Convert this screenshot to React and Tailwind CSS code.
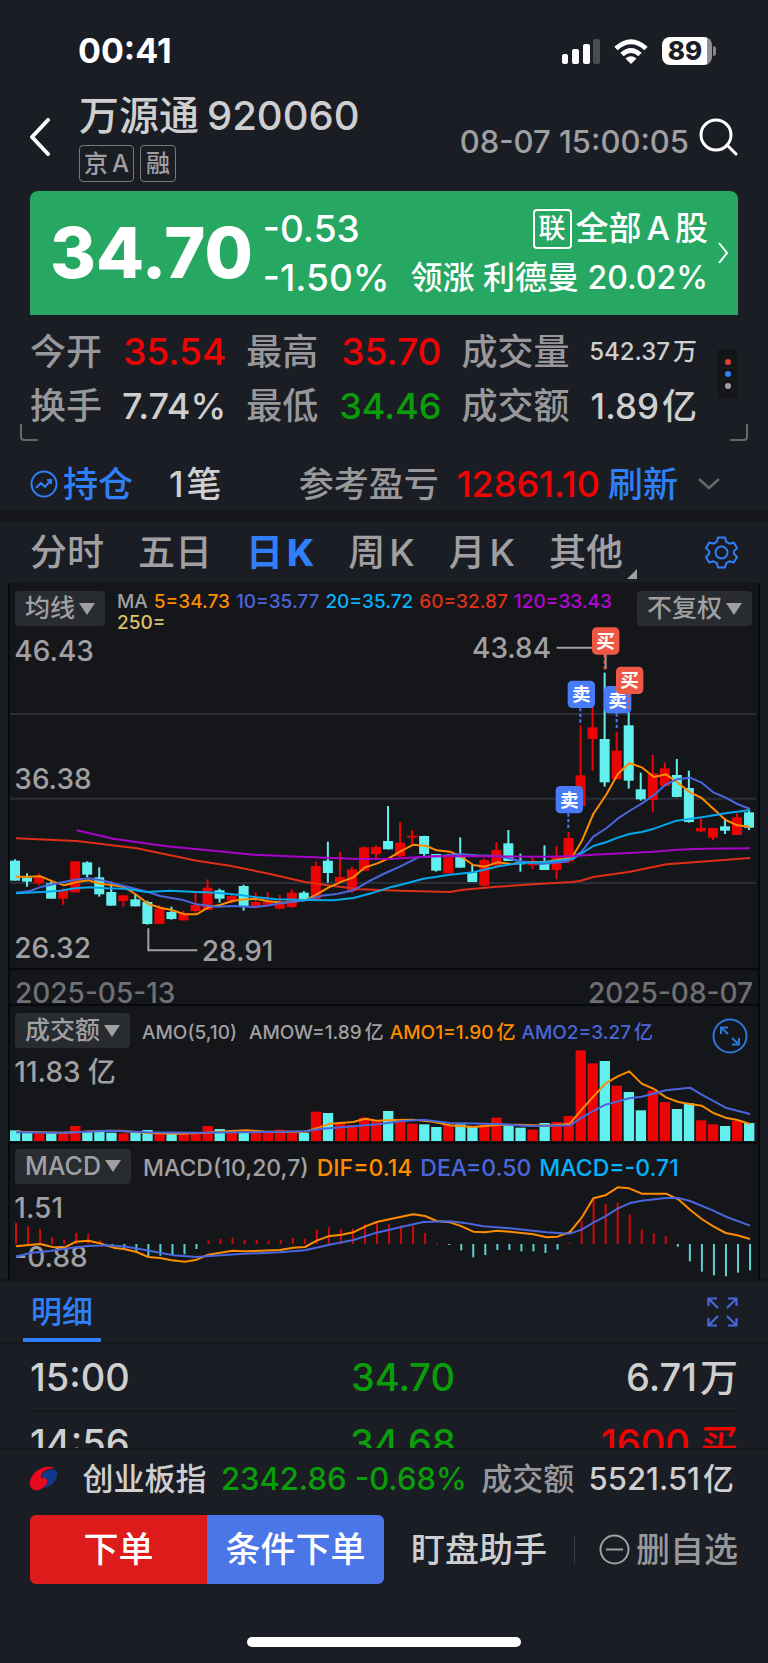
import React, { useState } from "react";

// [direction, high, body top, body bottom, low] in chart units
const CANDLES = [
  ["d", 838, 842, 902, 902], ["d", 880, 893, 905, 920], ["u", 880, 893, 910, 916],
  ["d", 905, 910, 956, 956], ["u", 925, 930, 956, 974], ["u", 844, 844, 937, 937],
  ["d", 844, 847, 884, 892], ["d", 862, 892, 943, 950], ["d", 905, 936, 977, 977],
  ["u", 945, 946, 963, 980], ["d", 942, 958, 979, 979], ["d", 962, 966, 1032, 1034],
  ["u", 975, 985, 1032, 1032], ["d", 980, 996, 1017, 1019], ["u", 992, 1000, 1021, 1021],
  ["u", 938, 975, 993, 998], ["u", 898, 923, 990, 990], ["d", 926, 931, 956, 968],
  ["u", 945, 948, 962, 970], ["d", 914, 918, 981, 992], ["u", 938, 966, 983, 985],
  ["u", 937, 965, 978, 980], ["u", 945, 965, 986, 988], ["u", 928, 938, 981, 983],
  ["d", 933, 938, 960, 960], ["u", 845, 858, 958, 958], ["d", 785, 842, 879, 908],
  ["u", 815, 891, 906, 908], ["u", 861, 868, 933, 938], ["u", 800, 802, 872, 874],
  ["u", 796, 801, 822, 836], ["d", 678, 783, 808, 808], ["u", 726, 788, 829, 832],
  ["u", 750, 767, 773, 792], ["d", 767, 768, 822, 830], ["d", 822, 822, 872, 875],
  ["u", 820, 832, 880, 880], ["d", 772, 828, 863, 863], ["d", 855, 877, 906, 906],
  ["u", 835, 840, 917, 920], ["u", 786, 810, 857, 857], ["d", 750, 790, 843, 843],
  ["d", 821, 845, 853, 875], ["u", 832, 848, 856, 867], ["d", 796, 848, 870, 870],
  ["u", 798, 828, 870, 898], ["u", 756, 774, 845, 850], ["u", 437, 586, 678, 680],
  ["u", 380, 442, 477, 572], ["d", 278, 477, 607, 620], ["u", 456, 512, 598, 598],
  ["d", 380, 436, 602, 626], ["d", 578, 628, 658, 662], ["u", 525, 580, 660, 697],
  ["u", 548, 565, 618, 620], ["d", 537, 585, 651, 652], ["d", 572, 624, 726, 728],
  ["u", 715, 744, 754, 756], ["u", 743, 744, 773, 780], ["d", 716, 739, 752, 762],
  ["u", 700, 712, 765, 765], ["d", 690, 697, 743, 750],
];

const AMOUNTS = [
  508, 516, 517, 515, 516, 495, 513, 508, 515, 517, 514, 507, 513, 517, 515, 515,
  495, 504, 515, 514, 511, 512, 506, 510, 515, 452, 456, 487, 492, 470, 480, 450,
  482, 488, 490, 498, 492, 490, 498, 490, 470, 492, 500, 506, 486, 483, 465, 268,
  307, 300, 374, 393, 448, 389, 423, 444, 427, 478, 490, 495, 480, 486,
];

const MACD_BARS = [
  786, 796, 804, 828, 836, 816, 819, 838, 855, 863, 871, 886, 884, 885, 880, 864,
  839, 833, 830, 836, 837, 839, 837, 831, 833, 806, 799, 804, 803, 790, 785, 790,
  793, 795, 816, 846, 852, 868, 889, 882, 867, 867, 871, 871, 876, 866, 845, 780,
  713, 729, 725, 760, 806, 817, 825, 857, 901, 932, 943, 946, 935, 928,
];

const MA_LINES = [
  { color: "#df2f16", points: "48,775 230,783 410,805 590,842 690,857 800,880 915,906 1000,918 1080,928 1200,932 1350,936 1390,929 1480,921 1600,913 1715,906 1740,903 1780,891 1890,875 2000,853 2100,845 2250,834" },
  { color: "#ff8c00", points: "48,890 85,890 122,889 158,904 193,916 230,906 265,901 302,911 340,916 372,921 410,945 445,972 480,983 515,990 555,1003 590,1003 625,982 660,975 697,963 733,958 770,957 805,964 850,968 915,961 950,943 985,923 1025,905 1060,892 1095,862 1130,851 1165,836 1200,815 1240,794 1280,798 1310,811 1350,815 1380,828 1420,855 1455,860 1492,847 1535,852 1580,846 1640,845 1680,838 1715,834 1745,784 1780,702 1820,642 1853,583 1888,549 1925,562 1962,591 1998,583 2030,606 2070,637 2105,654 2140,686 2177,720 2212,736 2250,740" },
  { color: "#4a66dc", points: "48,938 90,933 125,920 180,908 225,899 265,895 305,901 345,911 400,925 440,935 480,948 545,959 590,973 650,980 700,978 760,981 800,977 840,970 915,961 965,947 1010,942 1060,931 1105,905 1150,882 1200,860 1255,832 1320,828 1380,822 1430,826 1500,829 1560,843 1620,852 1700,845 1745,815 1780,770 1820,744 1853,716 1888,693 1925,671 1962,645 1998,613 2030,598 2070,593 2105,608 2140,637 2177,653 2212,672 2250,687" },
  { color: "#05a9ec", points: "48,940 125,936 180,932 225,925 270,922 320,925 375,926 440,936 510,932 590,936 650,938 720,945 770,952 830,958 915,960 1000,961 1060,954 1120,938 1170,922 1200,915 1270,896 1350,884 1420,877 1500,858 1560,849 1640,846 1720,836 1780,798 1820,786 1853,773 1888,762 1925,756 1962,746 2030,722 2105,712 2177,700 2250,690" },
  { color: "#a704c8", points: "230,751 340,776 500,799 640,812 760,824 900,830 1080,837 1180,836 1300,829 1450,829 1640,830 1720,828 1780,824 1960,815 2030,809 2110,806 2250,805" },
];

const AMO_LINES = [
  { color: "#ff8c00", points: "48,512 190,515 300,510 360,509 440,516 540,518 620,515 680,511 740,508 800,512 915,512 950,502 990,488 1060,483 1095,473 1130,479 1180,477 1240,476 1300,482 1350,493 1420,498 1490,492 1560,491 1640,494 1710,488 1745,446 1780,407 1816,368 1853,346 1888,331 1925,368 1962,384 1998,409 2035,423 2070,429 2105,434 2140,456 2177,470 2212,477 2250,489" },
  { color: "#4a66dc", points: "48,514 190,515 330,509 440,514 590,515 740,514 915,511 960,504 1060,496 1140,489 1200,481 1270,476 1350,486 1490,489 1590,495 1710,493 1745,470 1780,450 1816,431 1888,412 1925,407 1998,388 2070,380 2105,401 2177,440 2250,459" },
];

const MACD_LINES = [
  { color: "#ff8c00", points: "48,856 120,849 158,858 193,860 228,842 265,839 300,847 345,861 372,864 410,873 445,888 480,891 515,898 555,902 590,896 625,881 697,869 733,871 840,867 880,860 915,858 950,839 985,826 1025,821 1060,814 1095,797 1130,783 1200,768 1240,760 1275,765 1310,780 1350,784 1380,794 1420,812 1455,814 1492,809 1530,812 1600,820 1640,829 1672,827 1710,813 1745,770 1780,712 1816,703 1853,679 1888,682 1925,698 1998,698 2035,715 2070,746 2105,774 2140,796 2177,816 2212,823 2250,834" },
  { color: "#4a66dc", points: "48,887 90,876 150,870 228,859 265,855 320,853 380,857 440,868 520,883 590,888 640,884 720,879 840,874 915,868 985,852 1060,837 1130,815 1200,799 1270,783 1350,781 1400,787 1450,796 1530,802 1640,814 1710,818 1745,806 1780,785 1816,766 1853,743 1888,727 1925,719 1998,711 2035,711 2070,720 2140,749 2180,768 2250,794" },
];

const TRADES = [
  { x: 1703, y: 302, side: "卖" },
  { x: 1667, y: 618, side: "卖" },
  { x: 1812, y: 318, side: "卖" },
  { x: 1776, y: 142, side: "买" },
  { x: 1848, y: 260, side: "买" },
];

const STATS = [
  { label: "今开", value: "35.54", color: "text-[#ef0404]", size: "text-[37px]" },
  { label: "最高", value: "35.70", color: "text-[#ef0404]", size: "text-[37px]" },
  { label: "成交量", value: "542.37", unit: "万", color: "text-[#cfcfcf]", size: "text-2xl" },
  { label: "换手", value: "7.74%", color: "text-[#cfcfcf]", size: "text-4xl" },
  { label: "最低", value: "34.46", color: "text-[#0a9d0a]", size: "text-4xl" },
  { label: "成交额", value: "1.89", unit: "亿", color: "text-[#cfcfcf]", size: "text-[35px]" },
];

const TABS = ["分时", "五日", "日K", "周K", "月K", "其他"];

const UP = "#ec0303";
const DOWN = "#62f0ee";
const candleX = (i) => 45 + i * 36.1;
const tone = (dir) => (dir === "u" ? UP : DOWN);

const Lines = ({ lines }) =>
  lines.map((l) => (
    <polyline
      key={l.color}
      points={l.points}
      fill="none"
      stroke={l.color}
      strokeWidth="6"
      strokeLinejoin="round"
    />
  ));

const AxisText = ({ x, y, children }) => (
  <text x={x} y={y} fontSize="84" fontWeight="500" fill="#a0a0a3">
    {children}
  </text>
);

// number followed by 万 / 亿 with a little air between them
const Amount = ({ value, unit }) => (
  <span className="inline-flex gap-[3px]">
    <span>{value}</span>
    <span>{unit}</span>
  </span>
);

const StatusBar = () => (
  <div className="flex items-center justify-between pt-[31px] pl-[78px] pr-[52px] leading-10 text-white">
    <span className="text-[34px] font-bold">00:41</span>
    <div className="flex items-center gap-[14px]">
      <svg width="38" height="25" viewBox="0 0 38 25" fill="#fff">
        <rect x="0" y="15" width="6" height="10" rx="2" />
        <rect x="10" y="10" width="7" height="15" rx="2" />
        <rect x="21" y="5" width="7" height="20" rx="2" />
        <rect x="31" y="0" width="7" height="25" rx="2" fill="#4b4c52" />
      </svg>
      <svg width="34" height="25" viewBox="0 0 34 25" fill="none" stroke="#fff" strokeWidth="5">
        <path d="M2 9.500Q17 -4 32 9.500" />
        <path d="M8 15.500Q17 7.500 26 15.500" />
        <path d="M17 25L11.500 19.500Q17 15 22.500 19.500Z" fill="#fff" stroke="none" />
      </svg>
      <div className="flex items-center">
        <div className="flex h-7 w-[50px] items-center justify-center rounded-lg bg-linear-to-r from-white from-90% to-[#909196] to-90% pr-1 text-[26px] font-extrabold text-[#1b1d25]">
          89
        </div>
        <div className="ml-px h-2.5 w-[3px] rounded-r-full bg-[#85868b]" />
      </div>
    </div>
  </div>
);

const Header = () => (
  <header className="flex items-center pt-5 pr-[30px] pb-[9px] pl-[30px]">
    <button aria-label="返回" className="w-[49px] shrink-0">
      <svg width="21" height="38" viewBox="0 0 21 38" fill="none" stroke="#fff" strokeWidth="4" strokeLinecap="round" strokeLinejoin="round">
        <path d="M18 2L2 19l16 17" />
      </svg>
    </button>
    <div className="flex-1">
      <h1 className="flex gap-2 text-[40px] leading-[50px] font-medium text-[#cfcfcf]">
        <span>万源通</span>
        <span>920060</span>
      </h1>
      <div className="mt-1 flex gap-1.5 text-2xl leading-[35px] font-medium text-[#a0a0a3]">
        <span className="flex gap-1 rounded border border-[#77787c] px-1">
          <span>京</span>
          <span>A</span>
        </span>
        <span className="rounded border border-[#77787c] px-[5px]">融</span>
      </div>
    </div>
    <time className="pt-3 text-[31px] font-medium text-[#a0a0a3]">08-07 15:00:05</time>
    <button aria-label="搜索" className="ml-2.5">
      <svg width="39" height="38" viewBox="0 0 39 38" fill="none" stroke="#fff" strokeWidth="3" strokeLinecap="round">
        <circle cx="17" cy="17" r="15" />
        <path d="M28 27l9 9" />
      </svg>
    </button>
  </header>
);

const Quote = () => (
  <a
    href="#quote"
    className="mx-[30px] flex items-center rounded-t-lg bg-[#26a862] py-[13px] pr-[9px] pl-5 text-white"
  >
    <strong className="text-[70px] leading-none font-extrabold">34.70</strong>
    <div className="ml-2.5 text-[37px] leading-[49px] font-medium">
      <div>-0.53</div>
      <div>-1.50%</div>
    </div>
    <div className="ml-auto text-right text-[32px] leading-[49px] font-medium whitespace-nowrap">
      <div className="flex items-center justify-end gap-1 text-[33px]">
        <span className="rounded border-2 border-white px-1 text-[27px] leading-9">联</span>
        <span className="flex gap-[5px]">
          <span>全部</span>
          <span>A</span>
          <span>股</span>
        </span>
      </div>
      <div>领涨 利德曼 20.02%</div>
    </div>
    <svg className="ml-2.5 shrink-0" width="11" height="22" viewBox="0 0 11 22" fill="none" stroke="#fff" strokeWidth="2">
      <path d="M1 1l8 10-8 10" />
    </svg>
  </a>
);

const Stats = () => (
  <section className="relative flex items-start gap-5 px-[30px] pt-2.5 pb-2">
    <dl className="grid flex-1 grid-cols-[195fr_194fr_234fr] gap-x-5 text-[36px] leading-[54px] font-medium whitespace-nowrap">
      {STATS.map((s) => (
        <div key={s.label} className="flex items-center justify-between">
          <dt className="text-[#98989b]">{s.label}</dt>
          <dd className={`${s.size} leading-[54px] ${s.color}`}>
            {s.unit ? <Amount value={s.value} unit={s.unit} /> : s.value}
          </dd>
        </div>
      ))}
    </dl>
    <button aria-label="更多" className="mt-6 flex w-[21px] flex-col items-center gap-1.5 rounded-sm bg-[#15161a] py-2.5">
      <i className="size-1.5 rounded-full bg-[#e5432b]" />
      <i className="size-1.5 rounded-full bg-[#2f80f8]" />
      <i className="size-1.5 rounded-full bg-[#a0a0a3]" />
    </button>
    <i className="absolute bottom-0 left-5 h-[17px] w-[18px] rounded-bl-sm border-b-2 border-l-2 border-[#66676b]" />
    <i className="absolute right-5 bottom-0 h-[17px] w-[18px] rounded-br-sm border-r-2 border-b-2 border-[#66676b]" />
  </section>
);

const Position = () => (
  <section className="flex items-center pt-4 pr-12 pl-[30px] text-[35px] leading-[54px] font-medium">
    <svg width="28" height="28" viewBox="0 0 28 28" fill="none" stroke="#2f80f8" strokeWidth="2">
      <circle cx="14" cy="14" r="12.500" />
      <path d="M6 18l5-5 4 4 6-7M17 10h4v4" />
    </svg>
    <a href="#position" className="ml-[5px] text-[#2f80f8]">持仓</a>
    <span className="ml-9 text-[#cfcfcf]">
      <Amount value="1" unit="笔" />
    </span>
    <span className="ml-auto text-[#98989b]">参考盈亏</span>
    <span className="ml-[18px] text-4xl leading-[54px] text-[#ef0404]">12861.10</span>
    <button className="ml-2 text-[#2f80f8]">刷新</button>
    <svg className="ml-5" width="22" height="12" viewBox="0 0 22 12" fill="none" stroke="#66676b" strokeWidth="2.500">
      <path d="M1 1l10 9 10-9" />
    </svg>
  </section>
);

const PeriodTabs = ({ active, onChange }) => (
  <nav className="flex items-center border-t-[10px] border-[#15161a] px-[30px]">
    <div className="flex flex-1 justify-between">
      {TABS.map((t) => (
        <button
          key={t}
          onClick={() => onChange(t)}
          className={`pt-0.5 text-[37px] leading-[60px] ${
            t === active ? "font-bold text-[#2f80f8]" : "font-medium text-[#a0a0a3]"
          }`}
        >
          {t[1] === "K" ? (
            <span className="flex gap-1">
              <span>{t[0]}</span>
              <span className={t === active ? "font-extrabold" : "font-medium"}>K</span>
            </span>
          ) : (
            t
          )}
        </button>
      ))}
    </div>
    <svg className="ml-1 self-end pb-1" width="10" height="14" viewBox="0 0 10 10" fill="#a0a0a3">
      <path d="M10 0v10H0z" />
    </svg>
    <i className="ml-10 h-10 w-px bg-[#15161a]" />
    <button aria-label="设置" className="ml-[27px]">
      <svg width="33" height="33" viewBox="0 0 33 33" fill="none" stroke="#2f80f8" strokeWidth="2" strokeLinejoin="round">
        <path d="M13 1.500h7l1.200 4.300 3.300 1.900 4.300-1.200 3.200 5.600-3.100 3v2.800l3.100 3-3.200 5.600-4.300-1.200-3.300 1.900-1.200 4.300h-7l-1.200-4.300-3.300-1.900-4.300 1.200L1 20.900l3.100-3v-2.800l-3.100-3 3.200-5.600 4.300 1.200 3.300-1.900z" />
        <circle cx="16.500" cy="16.500" r="6" />
      </svg>
    </button>
  </nav>
);

const Picker = ({ children }) => (
  <button className="flex h-[35px] shrink-0 items-center gap-1 rounded bg-[#282b30] px-2.5 text-[25px] leading-[35px] font-medium text-[#a0a0a3]">
    {children}
    <svg width="16" height="12" viewBox="0 0 16 12" fill="#a0a0a3">
      <path d="M0 0h16L8 12z" />
    </svg>
  </button>
);

const PriceChart = () => (
  <div className="border-b-2 border-[#08090d]">
    <div className="flex h-[47px] items-start pt-2 pr-1.5 pl-[5px]">
      <Picker>均线</Picker>
      <div className="ml-3 flex flex-1 flex-wrap gap-x-1.5 text-[19px] leading-[21px] font-medium">
        <span className="text-[#a0a0a3]">MA</span>
        <span className="text-[#ff8c00]">5=34.73</span>
        <span className="text-[#4a66dc]">10=35.77</span>
        <span className="text-[#05b3fb]">20=35.72</span>
        <span className="text-[#df3218]">60=32.87</span>
        <span className="text-[#b506d6]">120=33.43</span>
        <span className="text-[#dcc06a]">250=</span>
      </div>
      <Picker>不复权</Picker>
    </div>
    <svg viewBox="30 150 2244 1014" className="block h-auto w-full overflow-visible">
      {[402, 656, 909].map((y) => (
        <line key={y} x1="30" x2="2268" y1={y} y2={y} stroke="#2b2e38" strokeWidth="6" />
      ))}
      {CANDLES.map(([dir, high, top, bottom, low], i) => (
        <g key={i} fill={tone(dir)}>
          <rect x={candleX(i) - 3} y={high} width="6" height={low - high} />
          <rect x={candleX(i) - 15} y={top} width="30" height={bottom - top} />
        </g>
      ))}
      <Lines lines={MA_LINES} />
      <AxisText x="43" y="243">46.43</AxisText>
      <AxisText x="43" y="626">36.38</AxisText>
      <AxisText x="43" y="1134">26.32</AxisText>
      <path d="M445 1045v66h147" fill="none" stroke="#a0a0a3" strokeWidth="6" />
      <AxisText x="605" y="1142">28.91</AxisText>
      <AxisText x="1416" y="233">43.84</AxisText>
      <path d="M1670 203h147v65" fill="none" stroke="#a0a0a3" strokeWidth="6" />
      {TRADES.map((t) => {
        const color = t.side === "买" ? "#ee5743" : "#477bf8";
        return (
          <g key={`${t.x}-${t.y}`}>
            <path d={`M${t.x + 38} ${t.y + 82}v48`} stroke={color} strokeWidth="6" strokeDasharray="10 7" />
            <rect x={t.x} y={t.y} width="82" height="82" rx="14" fill={color} />
            <text x={t.x + 41} y={t.y + 62} fontSize="56" fontWeight="700" textAnchor="middle" fill="#fff">
              {t.side}
            </text>
          </g>
        );
      })}
    </svg>
  </div>
);

const AmountChart = () => (
  <div className="border-b-2 border-[#08090d]">
    <div className="flex items-center pt-[7px] pr-2.5 pl-[5px]">
      <Picker>成交额</Picker>
      <div className="ml-3 flex flex-1 gap-1.5 pt-1.5 text-[19px] font-medium text-[#a0a0a3]">
        <span>AMO(5,10)</span>
        <span className="ml-1.5">
          <Amount value="AMOW=1.89" unit="亿" />
        </span>
        <span className="text-[#ff8c00]">
          <Amount value="AMO1=1.90" unit="亿" />
        </span>
        <span className="text-[#4a66dc]">
          <Amount value="AMO2=3.27" unit="亿" />
        </span>
      </div>
      <button aria-label="放大">
        <svg className="-mb-2.5" width="36" height="36" viewBox="0 0 36 36" fill="none" stroke="#2b78d8" strokeWidth="2">
          <circle cx="18" cy="18" r="16.500" />
          <path d="M16 16L9 9.500M9 16V9.500h7M20 20l7 6.500M20 26.500h7V20" />
        </svg>
      </button>
    </div>
    <svg viewBox="30 261 2244 282" className="block h-auto w-full overflow-visible">
      {AMOUNTS.map((top, i) => (
        <rect
          key={i}
          x={candleX(i) - 15}
          y={top}
          width="31"
          height={540 - top}
          fill={tone(CANDLES[i][0])}
        />
      ))}
      <Lines lines={AMO_LINES} />
      <AxisText x="43" y="364">11.83</AxisText>
      <AxisText x="263" y="364">亿</AxisText>
    </svg>
  </div>
);

const MacdChart = () => (
  <div>
    <div className="flex items-center pt-1 pl-[5px]">
      <Picker>MACD</Picker>
      <div className="ml-3 flex gap-2 pt-1 text-[23px] leading-8 font-medium">
        <span className="text-[#a0a0a3]">MACD(10,20,7)</span>
        <span className="text-[#ff8c00]">DIF=0.14</span>
        <span className="text-[#4a66dc]">DEA=0.50</span>
        <span className="text-[#05b3fb]">MACD=-0.71</span>
      </div>
    </div>
    <svg viewBox="30 669 2244 285" className="block h-auto w-full overflow-visible">
      {MACD_BARS.map((y, i) => (
        <rect
          key={i}
          x={candleX(i)}
          y={Math.min(y, 849)}
          width="6"
          height={Math.abs(849 - y)}
          fill={y < 849 ? "#d20707" : "#58d2d2"}
        />
      ))}
      <AxisText x="43" y="771">1.51</AxisText>
      <AxisText x="43" y="917">-0.88</AxisText>
      <Lines lines={MACD_LINES} />
    </svg>
  </div>
);

const Details = () => (
  <section className="border-t-2 border-[#15161a]">
    <div className="flex items-center justify-between border-b-2 border-[#15161a] pr-[30px] pl-[23px]">
      <button className="border-b-4 border-[#2f80f8] px-2 pt-1 text-[31px] leading-[53px] font-medium text-[#2f80f8]">
        明细
      </button>
      <button aria-label="展开">
        <svg width="31" height="30" viewBox="0 0 31 30" fill="none" stroke="#4a66dc" strokeWidth="2.200">
          <path d="M1.500 9V1.500H10M1.500 1.500L11 11M21 1.500h8.500V9M29.500 1.500L20 11M1.500 21v7.500H10M1.500 28.500L11 19M21 28.500h8.500V21M29.500 28.500L20 19" />
        </svg>
      </button>
    </div>
    <div className="h-[104px] overflow-hidden px-[30px]">
      <table className="w-full table-fixed text-[38px] leading-[66px] font-medium text-[#cfcfcf]">
        <tbody>
          <tr className="shadow-[0_2px_0_#15161a]">
            <td className="p-0">15:00</td>
            <td className="p-0 pl-[38px] text-center text-[#0a9d0a]">34.70</td>
            <td className="p-0 text-right">
              <Amount value="6.71" unit="万" />
            </td>
          </tr>
          <tr>
            <td className="p-0">14:56</td>
            <td className="p-0 pl-[38px] text-center text-[#0a9d0a]">34.68</td>
            <td className="p-0 text-right text-[#ef0404]">1600 买</td>
          </tr>
        </tbody>
      </table>
    </div>
  </section>
);

const IndexTicker = () => (
  <section className="flex items-center justify-between border-t-2 border-[#15161a] pr-[34px] pl-[30px] text-[31px] leading-[57px] font-medium whitespace-nowrap text-[#cfcfcf]">
    <svg width="28" height="25" viewBox="0 0 28 25">
      <path d="M25 2C14-3 0 7 0 17c0 5 3 8 8 7 6-1 10-6 9-10-1-3-4-3-6-1-1-5 3-9 8-10 2-1 4-1 6-1z" fill="#ea0a1e" />
      <path d="M19 4c5-2 9 0 8 5-1 7-6 12-14 13 3-2 5-5 4-8-1-3-4-3-6-1 0-4 3-8 8-9z" fill="#12388c" />
    </svg>
    <span className="ml-2.5">创业板指</span>
    <span className="text-[#0a9d0a]">2342.86 -0.68%</span>
    <span className="text-[#98989b]">成交额</span>
    <Amount value="5521.51" unit="亿" />
  </section>
);

const Actions = () => (
  <footer className="flex items-center px-[30px] pt-2 text-[34px] leading-[69px] font-medium">
    <div className="flex w-1/2 overflow-hidden rounded-md text-[35px] leading-[69px] text-white">
      <button className="flex-1 bg-[#dc1b1a]">下单</button>
      <button className="flex-1 bg-[#4a76e8]">条件下单</button>
    </div>
    <button className="ml-[27px] text-[#cfcfcf]">盯盘助手</button>
    <i className="ml-auto h-7 w-px bg-[#3a3c46]" />
    <button className="ml-6 flex items-center gap-1.5 text-[#98989b]">
      <svg width="31" height="31" viewBox="0 0 31 31" fill="none" stroke="#a0a0a3" strokeWidth="2">
        <circle cx="15.500" cy="15.500" r="14" />
        <path d="M7 15.500h17" />
      </svg>
      删自选
    </button>
  </footer>
);

const App = () => {
  const [period, setPeriod] = useState("日K");

  return (
    <div className="min-h-screen bg-[#1b1d25] font-[Inter,'Noto_Sans_CJK_SC',sans-serif]">
      <StatusBar />
      <Header />
      <Quote />
      <Stats />
      <Position />
      <PeriodTabs active={period} onChange={setPeriod} />
      <main className="mx-2 border-x-2 border-[#08090d] bg-[#15161a]">
        <PriceChart />
        <div className="flex justify-between border-b-2 border-[#08090d] px-[5px] pt-3 text-[28px] leading-[22px] font-medium text-[#6f7074]">
          <time>2025-05-13</time>
          <time>2025-08-07</time>
        </div>
        <AmountChart />
        <MacdChart />
      </main>
      <Details />
      <IndexTicker />
      <Actions />
      <div className="mx-auto mt-[53px] h-2.5 w-[274px] rounded-full bg-white" />
    </div>
  );
};

export default App;
